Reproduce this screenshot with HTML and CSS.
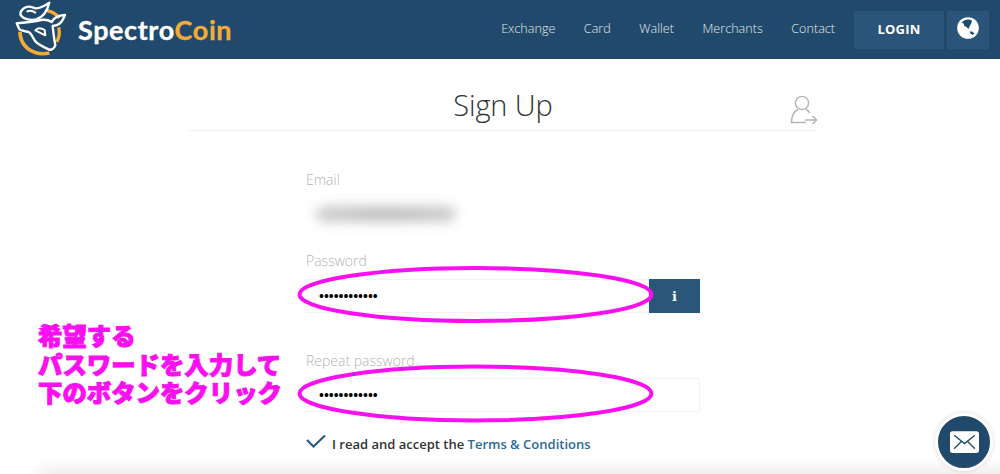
FILE: index.html
```html
<!DOCTYPE html>
<html lang="en">
<head>
<meta charset="utf-8">
<title>SpectroCoin Sign Up</title>
<link rel="stylesheet" href="styles.css">
</head>
<body>
<header class="topbar">
  <a class="brand">
    <svg class="logo" width="66" height="59" viewBox="0 0 198 177" fill="none" stroke-linejoin="round" stroke-linecap="round">
      <path d="M112 32 C128 36 140 44 148 54 M146 82 C150 98 148 112 140 126" stroke="#f5ac37" stroke-width="10" stroke-linecap="butt"/>
      <path d="M30 95 C30 125 48 150 78 158 C90 162 104 162 118 159" stroke="#f5ac37" stroke-width="11" stroke-linecap="butt"/>
      <path d="M118 8 C104 18 90 26 75 25 C62 18 50 18 40 26 C31 34 29 42 34 48 C42 58 62 62 78 58 C92 54 110 40 118 8 Z" stroke="#fff" stroke-width="7"/>
      <path d="M52 34 C60 30 68 32 76 38" stroke="#fff" stroke-width="6"/>
      <path d="M20 70 C44 68 70 66 92 60 C104 58 116 60 125 66 C132 52 148 46 165 45 C158 62 152 76 128 78 C130 96 132 116 136 136 C132 146 124 152 116 148 C102 142 88 136 76 124 C68 112 64 100 56 96 C44 94 34 92 28 88 Z" stroke="#fff" stroke-width="7"/>
      <path d="M76 91 C84 82 94 84 104 90 L106 106 Z" stroke="#fff" stroke-width="6"/>
    </svg>
    <span class="wordmark">Spectro<span class="coin">Coin</span></span>
  </a>
  <nav class="nav">
    <a class="nav-link">Exchange</a>
    <a class="nav-link">Card</a>
    <a class="nav-link">Wallet</a>
    <a class="nav-link">Merchants</a>
    <a class="nav-link">Contact</a>
  </nav>
  <button class="login">LOGIN</button>
  <button class="globe" aria-label="Language">
    <svg width="22" height="22" viewBox="0 0 22 22">
      <circle cx="11" cy="11" r="10.8" fill="#fff"/>
      <path d="M4.5 5.5 L8 3 L12 2.6 L15 3.5 L14.5 6 L13 8.5 L11.5 12 L9.5 10 L7.5 9 L6.5 6.5 Z" fill="#21496b"/>
      <path d="M12.5 14.5 L15 14.5 L17.5 16.5 L15.5 18 L13.5 16.5 Z" fill="#21496b"/>
    </svg>
  </button>
</header>

<main class="page">
  <div class="heading">
    <h1 class="title">Sign Up</h1>
    <svg class="user-icon" width="28" height="30" viewBox="0 0 28 30" fill="none" stroke="#b4b4b4" stroke-width="1.4">
      <circle cx="12" cy="8" r="6.6"/>
      <path d="M8 14.5 C3 17 1.5 21 1.5 27.5 H16"/>
      <path d="M16 14.5 C18 15.5 19 16.5 20 18"/>
      <path d="M15 25 H26.5 M22.5 21 L26.5 25 L22.5 29"/>
    </svg>
  </div>

  <form class="form">
    <label class="label">Email</label>
    <div class="field field-blank"><span class="blur"></span></div>
    <label class="label">Password</label>
    <div class="row">
      <div class="field field-pass">••••••••••••</div>
      <button type="button" class="info">i</button>
    </div>
    <label class="label label-repeat">Repeat password</label>
    <div class="field field-pass">••••••••••••</div>
    <div class="accept">
      <svg class="check" width="20" height="14" viewBox="0 0 20 14" fill="none"><path d="M1 6 L7.5 12.5 L19 1.5" stroke="#2b5d84" stroke-width="2.2"/></svg>
      <span>I read and accept the <a class="terms">Terms &amp; Conditions</a></span>
    </div>
  </form>
</main>

<div class="fade"></div>

<svg class="marks" width="1000" height="474" viewBox="0 0 1000 474" fill="none" stroke="#fa0ff0" stroke-width="4">
  <ellipse cx="475.5" cy="294.5" rx="176" ry="26.5"/>
  <ellipse cx="475.5" cy="393.5" rx="176" ry="27"/>
</svg>

<p class="note">希望する<br>パスワードを入力して<br>下のボタンをクリック</p>

<button class="chat" aria-label="Message">
  <svg width="29" height="22" viewBox="0 0 28 21">
    <rect width="28" height="21" rx="2.5" fill="#fff"/>
    <path d="M4 4 L14 12 L24 4 M4 17 L11 10 M24 17 L17 10" fill="none" stroke="#21496b" stroke-width="1.3"/>
  </svg>
</button>
</body>
</html>
```
FILE: styles.css
```css
* { box-sizing: border-box; }
html, body { margin: 0; height: 474px; overflow: hidden; }
body { position: relative; background: #fff; font-family: "Open Sans", "Noto Sans CJK JP", sans-serif; color: #333; }

.topbar { display: flex; align-items: center; height: 59px; padding: 0 11px 0 10px; background: #21496b; }
.brand { display: flex; align-items: center; margin-right: auto; }
.logo { display: block; }
.wordmark { margin-left: 2px; font: 700 27px/1 Lato, sans-serif; letter-spacing: .6px; color: #fff; -webkit-text-stroke: .3px currentColor; }
.coin { color: #f5ac37; }
.nav { display: flex; gap: 28.5px; margin: -3px 19px 0 0; }
.nav-link { font-size: 12.6px; font-weight: 300; color: #e3e9ee; }
.login { width: 90px; height: 38px; margin-right: 3px; padding-bottom: 2px; border: 0; background: #2a5479; color: #fff; font: 700 13px "Open Sans", sans-serif; letter-spacing: .2px; }
.globe { display: flex; align-items: center; justify-content: center; width: 42px; height: 38px; padding: 0 0 4px; border: 0; background: #2a5479; }

.page { display: flex; flex-direction: column; align-items: center; padding-left: 6px; }
.heading { position: relative; width: 630px; height: 72px; padding-top: 26px; border-bottom: 1px solid #f2f2f2; text-align: center; }
.title { margin: 0; font-size: 29px; line-height: 40px; font-weight: 300; color: #333; letter-spacing: -.1px; }
.user-icon { position: absolute; right: 0; top: 36px; }

.form { display: flex; flex-direction: column; width: 394px; margin-top: 39px; }
.label { font-size: 14px; line-height: 19px; font-weight: 300; color: #b4b4b4; }
.field { height: 34px; padding-left: 12px; border: 1px solid #f1f3f5; font-size: 13px; font-weight: 700; color: #000; line-height: 32px; }
.field-blank { display: flex; align-items: center; height: 40px; margin: 5px 0 17px; border-color: #fdfdfd; }
.field-pass { flex: 1; }
.blur { display: block; width: 140px; height: 16px; margin-left: -3px; border-radius: 8px; background: radial-gradient(ellipse, #b8b8b8, #d4d4d4); filter: blur(6px); }
.row { display: flex; margin-top: 9px; }
.info { width: 51px; height: 34px; padding: 0; border: 0; background: #2a5679; color: #fff; font: 700 13px "DejaVu Serif", serif; }
.label-repeat { margin-top: 38px; margin-bottom: 8px; }
.accept { display: flex; align-items: center; gap: 6px; margin-top: 23px; font-size: 13px; line-height: 18px; font-weight: 600; color: #333; }
.check { margin-top: -6px; }
.terms { color: #2b6a9b; }

.fade { position: absolute; left: 40px; right: -40px; bottom: -14px; height: 14px; box-shadow: 0 -2px 18px rgba(0,0,0,.12); }
.marks { position: absolute; left: 0; top: 0; pointer-events: none; }
.note { position: absolute; left: 38px; top: 321px; margin: 0; font: 900 24.4px/28.5px "Noto Sans CJK JP", sans-serif; color: #fa0ff0; -webkit-text-stroke: 1px #fa0ff0; }
.chat { position: absolute; left: 935px; top: 413px; display: flex; align-items: center; justify-content: center; width: 58px; height: 58px; padding: 0; border: 3.5px solid #fff; border-radius: 50%; background: #21496b; box-shadow: 0 0 4px rgba(0,0,0,.15); }
```
